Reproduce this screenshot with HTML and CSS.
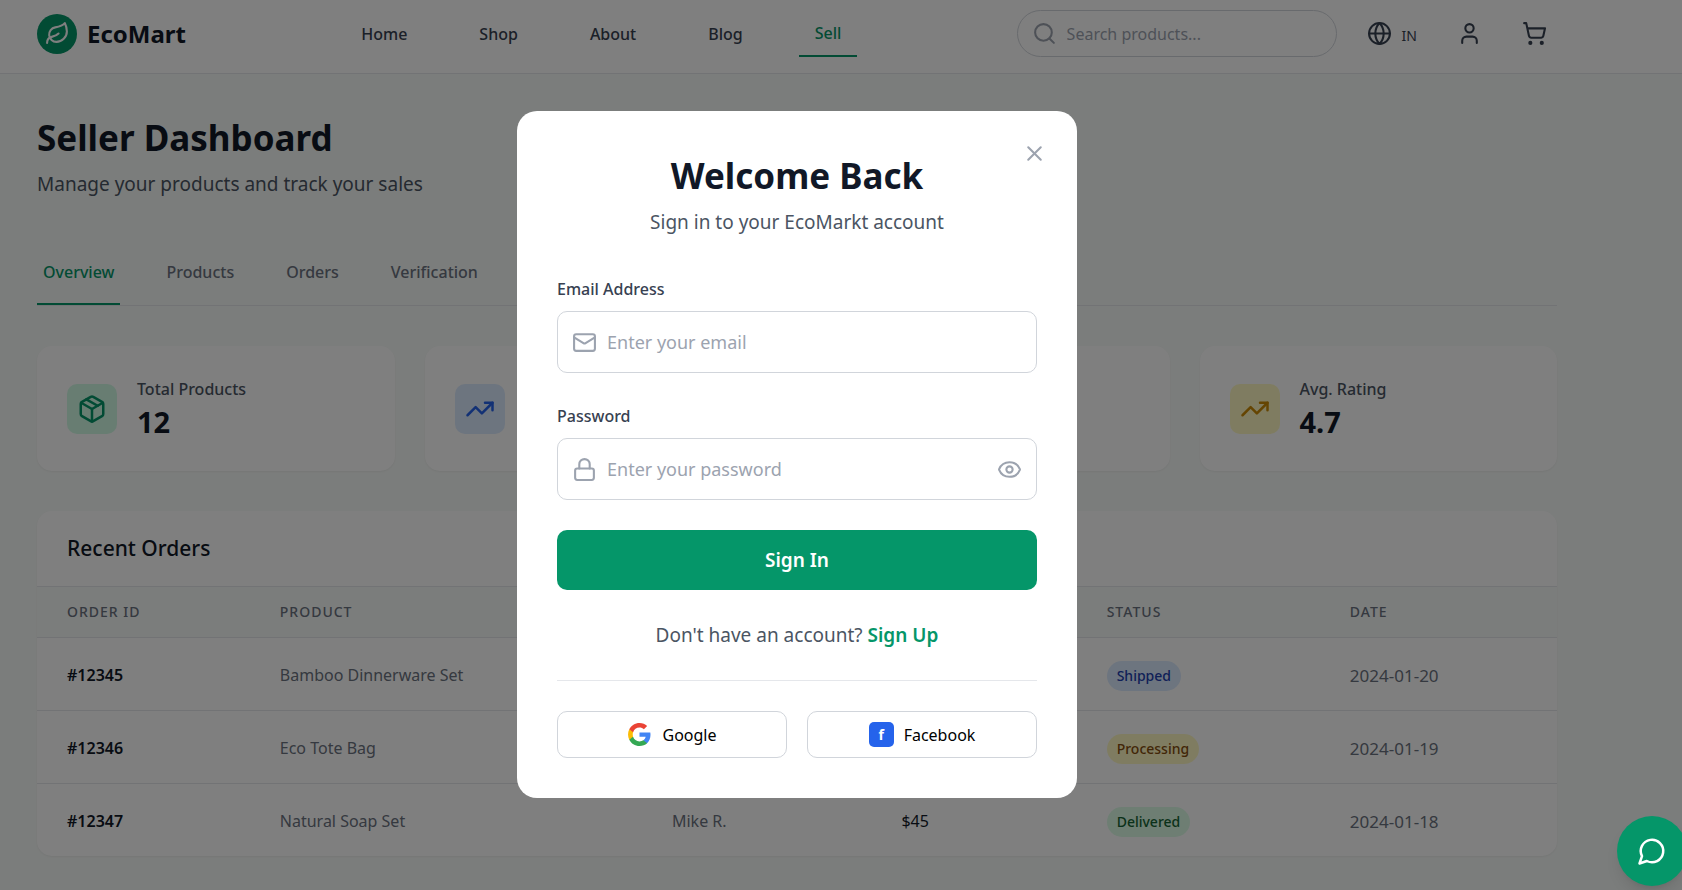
FILE: index.html
```html
<!DOCTYPE html>
<html lang="en">
<head>
<meta charset="utf-8">
<meta name="viewport" content="width=device-width, initial-scale=1">
<title>EcoMart – Seller Dashboard</title>
<link rel="stylesheet" href="styles.css">
</head>
<body>
<svg class="sprite" aria-hidden="true">
  <symbol id="i-trend" viewBox="0 0 24 24"><path d="M22 7l-8.5 8.5-5-5L2 17"/><path d="M16 7h6v6"/></symbol>
</svg>

<header class="topbar">
  <div class="shell topbar-row">
    <a class="brand" href="#">
      <span class="brand-mark"><svg class="icon" viewBox="0 0 24 24"><path d="M11 20A7 7 0 0 1 9.8 6.1C15.5 5 17 4.48 19 2c1 2 2 4.18 2 8 0 5.5-4.78 10-10 10Z"/><path d="M2 21c0-3 1.85-5.36 5.08-6C9.5 14.52 12 13 13 12"/></svg></span>
      <span>EcoMart</span>
    </a>
    <nav class="nav">
      <a class="nav-link" href="#">Home</a>
      <a class="nav-link" href="#">Shop</a>
      <a class="nav-link" href="#">About</a>
      <a class="nav-link" href="#">Blog</a>
      <a class="nav-link nav-link-active" href="#">Sell</a>
    </nav>
    <div class="tools">
      <label class="search">
        <svg class="icon" viewBox="0 0 24 24"><circle cx="11" cy="11" r="8"/><path d="m21 21-4.3-4.3"/></svg>
        <input type="search" placeholder="Search products..." aria-label="Search products">
      </label>
      <button class="tool" type="button" aria-label="Region: IN">
        <svg class="icon" viewBox="0 0 24 24"><circle cx="12" cy="12" r="10"/><path d="M12 2a14.5 14.5 0 0 0 0 20 14.5 14.5 0 0 0 0-20"/><path d="M2 12h20"/></svg>
        <span class="region">IN</span>
      </button>
      <button class="tool" type="button" aria-label="Account">
        <svg class="icon" viewBox="0 0 24 24"><path d="M19 21v-2a4 4 0 0 0-4-4H9a4 4 0 0 0-4 4v2"/><circle cx="12" cy="7" r="4"/></svg>
      </button>
      <button class="tool" type="button" aria-label="Cart">
        <svg class="icon" viewBox="0 0 24 24"><circle cx="8" cy="21" r="1"/><circle cx="19" cy="21" r="1"/><path d="M2.05 2.05h2l2.66 12.42a2 2 0 0 0 2 1.58h9.78a2 2 0 0 0 1.95-1.57l1.65-7.43H5.12"/></svg>
      </button>
    </div>
  </div>
</header>

<main class="shell page">
  <h1 class="title">Seller Dashboard</h1>
  <p class="subtitle">Manage your products and track your sales</p>

  <nav class="tabs">
    <button class="tab tab-active" type="button">Overview</button>
    <button class="tab" type="button">Products</button>
    <button class="tab" type="button">Orders</button>
    <button class="tab" type="button">Verification</button>
  </nav>

  <section class="stats">
    <article class="card stat">
      <span class="tile tile-green"><svg class="icon icon-lg" viewBox="0 0 24 24"><path d="m7.5 4.27 9 5.15"/><path d="M21 8a2 2 0 0 0-1-1.73l-7-4a2 2 0 0 0-2 0l-7 4A2 2 0 0 0 3 8v8a2 2 0 0 0 1 1.73l7 4a2 2 0 0 0 2 0l7-4A2 2 0 0 0 21 16Z"/><path d="m3.3 7 8.7 5 8.7-5"/><path d="M12 22V12"/></svg></span>
      <div><p class="stat-label">Total Products</p><p class="stat-value">12</p></div>
    </article>
    <article class="card stat">
      <span class="tile tile-blue"><svg class="icon icon-lg"><use href="#i-trend"/></svg></span>
    </article>
    <article class="card stat"></article>
    <article class="card stat">
      <span class="tile tile-yellow"><svg class="icon icon-lg"><use href="#i-trend"/></svg></span>
      <div><p class="stat-label">Avg. Rating</p><p class="stat-value">4.7</p></div>
    </article>
  </section>

  <section class="card orders">
    <h2 class="orders-title">Recent Orders</h2>
    <table class="table">
      <colgroup><col class="c-id"><col class="c-product"><col class="c-customer"><col class="c-amount"><col class="c-status"><col></colgroup>
      <thead>
        <tr><th>Order ID</th><th>Product</th><th></th><th></th><th>Status</th><th>Date</th></tr>
      </thead>
      <tbody>
        <tr><td class="strong">#12345</td><td>Bamboo Dinnerware Set</td><td></td><td></td><td><span class="badge badge-blue">Shipped</span></td><td class="date">2024-01-20</td></tr>
        <tr><td class="strong">#12346</td><td>Eco Tote Bag</td><td></td><td></td><td><span class="badge badge-yellow">Processing</span></td><td class="date">2024-01-19</td></tr>
        <tr><td class="strong">#12347</td><td>Natural Soap Set</td><td>Mike R.</td><td class="amount">$45</td><td><span class="badge badge-green">Delivered</span></td><td class="date">2024-01-18</td></tr>
      </tbody>
    </table>
  </section>
</main>

<div class="overlay">
  <section class="modal" role="dialog" aria-modal="true" aria-labelledby="modal-title">
    <button class="close" type="button" aria-label="Close"><svg class="icon" viewBox="0 0 24 24"><path d="M18 6 6 18"/><path d="m6 6 12 12"/></svg></button>
    <h2 class="modal-title" id="modal-title">Welcome Back</h2>
    <p class="modal-subtitle">Sign in to your EcoMarkt account</p>
    <form class="form">
      <div class="field">
        <label class="field-label" for="email">Email Address</label>
        <div class="control">
          <svg class="icon" viewBox="0 0 24 24"><rect x="2" y="4" width="20" height="16" rx="2"/><path d="m22 7-8.97 5.7a1.94 1.94 0 0 1-2.06 0L2 7"/></svg>
          <input id="email" type="email" placeholder="Enter your email">
        </div>
      </div>
      <div class="field">
        <label class="field-label" for="password">Password</label>
        <div class="control">
          <svg class="icon" viewBox="0 0 24 24"><rect x="3" y="11" width="18" height="11" rx="2"/><path d="M7 11V7a5 5 0 0 1 10 0v4"/></svg>
          <input id="password" type="password" placeholder="Enter your password">
          <button class="reveal" type="button" aria-label="Show password"><svg class="icon" viewBox="0 0 24 24"><path d="M2.06 12.35a1 1 0 0 1 0-.7 10.75 10.75 0 0 1 19.88 0 1 1 0 0 1 0 .7 10.75 10.75 0 0 1-19.88 0"/><circle cx="12" cy="12" r="3"/></svg></button>
        </div>
      </div>
      <button class="submit" type="submit">Sign In</button>
    </form>
    <p class="switch">Don't have an account? <a href="#">Sign Up</a></p>
    <div class="social">
      <button class="social-button" type="button">
        <svg class="google" viewBox="0 0 24 24"><path fill="#4285F4" d="M22.56 12.25c0-.78-.07-1.53-.2-2.25H12v4.26h5.92c-.26 1.37-1.04 2.53-2.21 3.31v2.77h3.57c2.08-1.92 3.28-4.74 3.28-8.09z"/><path fill="#34A853" d="M12 23c2.97 0 5.46-.98 7.28-2.66l-3.57-2.77c-.98.66-2.23 1.06-3.71 1.06-2.86 0-5.29-1.93-6.16-4.53H2.18v2.84C3.99 20.53 7.7 23 12 23z"/><path fill="#FBBC05" d="M5.84 14.09c-.22-.66-.35-1.36-.35-2.09s.13-1.43.35-2.09V7.07H2.18C1.43 8.55 1 10.22 1 12s.43 3.45 1.18 4.93l2.85-2.22.81-.62z"/><path fill="#EA4335" d="M12 5.38c1.62 0 3.06.56 4.21 1.64l3.15-3.15C17.45 2.09 14.97 1 12 1 7.7 1 3.99 3.47 2.18 7.07l3.66 2.84c.87-2.6 3.3-4.53 6.16-4.53z"/></svg>
        Google
      </button>
      <button class="social-button" type="button"><span class="facebook" aria-hidden="true">f</span>Facebook</button>
    </div>
  </section>
</div>

<button class="chat" type="button" aria-label="Open chat"><svg class="icon icon-xl" viewBox="0 0 24 24"><path d="M7.9 20A9 9 0 1 0 4 16.1L2 22Z"/></svg></button>
</body>
</html>
```
FILE: styles.css
```css
:root {
  --green: #059669;
  --ink: #111827;
  --text: #374151;
  --muted: #4b5563;
  --soft: #6b7280;
  --faint: #9ca3af;
  --line: #e5e7eb;
  --field-line: #d1d5db;
  --page: #f7faf8;
}

*, *::before, *::after { box-sizing: border-box; }

body {
  margin: 0;
  min-height: 100vh;
  background: var(--page);
  color: var(--ink);
  font-family: "Noto Sans", "Open Sans", sans-serif;
  font-size: 19px;
  line-height: 30px;
}

h1, h2, p { margin: 0; }
a { color: inherit; text-decoration: none; }
button, input { font: inherit; color: inherit; }
button { margin: 0; padding: 0; border: 0; background: none; cursor: pointer; }
input { min-width: 0; padding: 0; border: 0; outline: 0; background: none; }
input::placeholder { color: var(--faint); opacity: 1; }

.sprite { display: none; }
.icon {
  flex: none;
  display: block;
  width: 25px;
  height: 25px;
  fill: none;
  stroke: currentColor;
  stroke-width: 2;
  stroke-linecap: round;
  stroke-linejoin: round;
}
.icon-lg, .icon-xl { width: 30px; height: 30px; }

.shell { padding-left: 37px; padding-right: 125px; }

/* Top bar */
.topbar { background: #fff; border-bottom: 1px solid var(--line); }
.topbar-row {
  display: flex;
  align-items: center;
  justify-content: space-between;
  padding-top: 10px;
  padding-bottom: 16px;
}
.brand { display: flex; align-items: center; gap: 10px; font-size: 24px; font-weight: 700; }
.brand-mark {
  display: grid;
  place-items: center;
  width: 40px;
  height: 40px;
  border-radius: 50%;
  background: var(--green);
  color: #fff;
}
.nav { display: flex; align-items: center; gap: 40px; }
.nav-link {
  padding: 11px 16px 9px;
  color: var(--text);
  font-size: 16px;
  font-weight: 500;
  line-height: 25px;
}
.nav-link-active { color: var(--green); border-bottom: 2px solid var(--green); }
.tools { display: flex; align-items: center; gap: 20px; }
.search {
  display: flex;
  align-items: center;
  gap: 10px;
  width: 320px;
  height: 47px;
  padding: 0 14px;
  border: 1px solid var(--field-line);
  border-radius: 24px;
  color: var(--faint);
  font-size: 16px;
}
.search input { flex: 1; color: var(--ink); }
.tool { display: flex; align-items: center; gap: 10px; padding: 10px; color: var(--text); }
.region { padding-top: 5px; font-size: 14px; line-height: 20px; }

/* Page heading and tabs */
.page { padding-top: 40px; padding-bottom: 32px; }
.title { font-size: 35px; font-weight: 700; line-height: 47px; }
.subtitle { margin-top: 8px; color: var(--muted); }
.tabs { display: flex; gap: 40px; margin-top: 40px; border-bottom: 1px solid var(--line); }
.tab {
  padding: 21px 6px 18px;
  border-bottom: 2px solid transparent;
  color: var(--soft);
  font-size: 16px;
  font-weight: 500;
  line-height: 25px;
}
.tab-active { color: var(--green); border-color: var(--green); }

/* Stat cards */
.card { background: #fff; border-radius: 15px; box-shadow: 0 1px 2px rgba(0, 0, 0, 0.05); }
.stats { display: grid; grid-template-columns: repeat(4, 1fr); gap: 30px; margin-top: 40px; }
.stat { display: flex; align-items: center; gap: 20px; padding: 30px; }
.tile { display: grid; place-items: center; width: 50px; height: 50px; border-radius: 10px; }
.tile-green { background: #d1fae5; color: #059669; }
.tile-blue { background: #dbeafe; color: #2563eb; }
.tile-yellow { background: #fef9c3; color: #ca8a04; }
.stat-label { color: var(--muted); font-size: 16px; font-weight: 500; line-height: 27px; }
.stat-value { font-size: 29px; font-weight: 700; line-height: 38px; }

/* Orders table */
.orders { margin-top: 40px; overflow: hidden; }
.orders-title {
  padding: 20px 30px;
  border-bottom: 1px solid var(--line);
  font-size: 21px;
  font-weight: 500;
  line-height: 35px;
}
.table { width: 100%; table-layout: fixed; border-spacing: 0; }
.c-id { width: 14%; }
.c-product { width: 25.8%; }
.c-customer { width: 15.1%; }
.c-amount { width: 13.5%; }
.c-status { width: 16%; }
.table th {
  padding: 15px 30px;
  border-bottom: 1px solid var(--line);
  background: var(--page);
  color: var(--soft);
  font-size: 14px;
  font-weight: 500;
  letter-spacing: 1px;
  line-height: 20px;
  text-align: left;
  text-transform: uppercase;
}
.table td {
  height: 73px;
  padding: 3px 30px 0;
  border-bottom: 1px solid var(--line);
  color: var(--soft);
  font-size: 16px;
  line-height: 25px;
  white-space: nowrap;
}
.table tbody tr:last-child td { height: 72px; border-bottom: 0; }
.table .strong { color: var(--ink); font-weight: 600; }
.table .amount { color: var(--ink); }
.table .date { font-size: 17px; }
.badge {
  display: inline-block;
  padding: 0 10px;
  border-radius: 15px;
  font-size: 14px;
  font-weight: 500;
  line-height: 30px;
}
.badge-blue { background: #dbeafe; color: #1e40af; }
.badge-yellow { background: #fef9c3; color: #854d0e; }
.badge-green { background: #dcfce7; color: #166534; }

/* Sign-in dialog */
.overlay {
  position: fixed;
  inset: 0;
  z-index: 10;
  display: grid;
  place-items: center;
  padding: 19px 88px 0 0;
  background: rgba(0, 0, 0, 0.5);
}
.modal {
  position: relative;
  width: 100%;
  max-width: 560px;
  padding: 40px;
  border-radius: 20px;
  background: #fff;
  text-align: center;
}
.close { position: absolute; top: 30px; right: 30px; color: var(--faint); }
.modal-title { font-size: 35px; font-weight: 700; line-height: 49px; }
.modal-subtitle { margin-top: 7px; color: var(--muted); }
.form { display: grid; gap: 30px; margin-top: 39px; }
.field { display: grid; gap: 8px; text-align: left; }
.field-label { color: var(--text); font-size: 16px; font-weight: 500; line-height: 27px; }
.control {
  display: flex;
  align-items: center;
  gap: 10px;
  height: 62px;
  padding: 0 14px;
  border: 1px solid var(--field-line);
  border-radius: 10px;
  color: var(--faint);
}
.control input { flex: 1; color: var(--ink); font-size: 18px; }
.submit {
  height: 60px;
  border-radius: 10px;
  background: var(--green);
  color: #fff;
  font-weight: 600;
}
.switch { margin-top: 30px; color: var(--muted); }
.switch a { color: var(--green); font-weight: 600; }
.social {
  display: grid;
  grid-template-columns: 1fr 1fr;
  gap: 20px;
  margin-top: 30px;
  padding-top: 30px;
  border-top: 1px solid var(--line);
}
.social-button {
  display: flex;
  align-items: center;
  justify-content: center;
  gap: 10px;
  height: 47px;
  border: 1px solid var(--field-line);
  border-radius: 10px;
  color: #000;
  font-size: 16px;
}
.google { width: 25px; height: 25px; }
.facebook {
  width: 25px;
  height: 25px;
  border-radius: 5px;
  background: #2563eb;
  color: #fff;
  font-size: 14px;
  font-weight: 700;
  line-height: 25px;
}

/* Chat launcher */
.chat {
  position: fixed;
  right: -5px;
  bottom: 4px;
  z-index: 20;
  display: grid;
  place-items: center;
  width: 70px;
  height: 70px;
  border-radius: 50%;
  background: var(--green);
  color: #fff;
  box-shadow: 0 10px 15px -3px rgba(0, 0, 0, 0.1), 0 4px 6px -4px rgba(0, 0, 0, 0.1);
}
```
